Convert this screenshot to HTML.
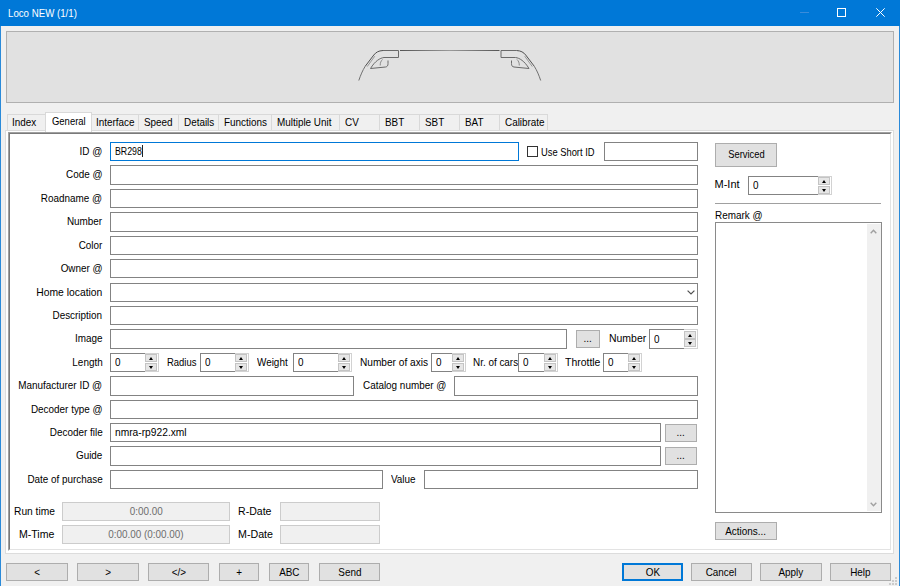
<!DOCTYPE html><html><head><meta charset="utf-8"><title>Loco NEW</title><style>
*{margin:0;padding:0;box-sizing:border-box}
html,body{width:900px;height:586px;overflow:hidden;background:#f0f0f0;position:relative;
 font-family:"Liberation Sans",sans-serif;font-size:11px;color:#000}
div,span{position:absolute}
.t{white-space:nowrap;line-height:19px;height:19px;transform:scaleX(.9);transform-origin:0 0}
.lbl{white-space:nowrap;line-height:19px;height:19px;text-align:right;transform:scaleX(.9);transform-origin:100% 0}
.c{display:inline-block;transform:scaleX(.9);white-space:nowrap}
.ed{background:#fff;border:1px solid #838383;height:19px}
.btn{background:#e1e1e1;border:1px solid #adadad;text-align:center;white-space:nowrap}
.dis{background:#f0f0f0;border:1px solid #cccccc;color:#6d6d6d;text-align:center;line-height:17px;white-space:nowrap}
.tab{top:114px;height:17px;background:#f0f0f0;border:1px solid #d9d9d9;border-bottom:none;line-height:15px;padding-left:5px;white-space:nowrap}
.sb{background:#fff;border:1px solid #838383;height:19px}
.sbb{background:#f0f0f0;border:1px solid #cfcfcf;border-left:none}
.ar{width:0;height:0;border-left:2.5px solid transparent;border-right:2.5px solid transparent}
</style></head><body>
<div style="left:0;top:0;width:900px;height:26px;background:#0078d7"></div>
<span class="t" style="left:7.5px;top:4px;color:#fff;transform:scaleX(.88)">Loco NEW (1/1)</span>
<div style="left:800px;top:12px;width:9px;height:1px;background:#3a8cdb"></div>
<div style="left:837px;top:8px;width:9px;height:9px;border:1px solid #fff"></div>
<svg style="position:absolute;left:876px;top:8px" width="9" height="9" viewBox="0 0 9 9"><path d="M0.3 0.3L8.7 8.7M8.7 0.3L0.3 8.7" stroke="#fff" stroke-width="1"/></svg>
<div style="left:0;top:26px;width:1px;height:560px;background:#2a8ad9"></div>
<div style="left:899px;top:26px;width:1px;height:560px;background:#2a8ad9"></div>
<div style="left:6px;top:31px;width:888px;height:72px;background:#e1e1e1;border:1px solid #b0b0b0"></div>
<svg style="position:absolute;left:0;top:0" width="900" height="110" viewBox="0 0 900 110">
<defs><linearGradient id="rg" gradientUnits="userSpaceOnUse" x1="400" x2="500" y1="0" y2="0"><stop offset="0" stop-color="#555"/><stop offset="0.5" stop-color="#9a9a9a"/><stop offset="1" stop-color="#555"/></linearGradient></defs>
<path d="M400 50.5 H499.5" stroke="url(#rg)" stroke-width="1" fill="none"/>
<g fill="none" stroke="#505050" stroke-width="1">
<path d="M383 50.5 H398.5 V57.5 H384 C380 58 375 61 370.5 68.5 L385.5 67 C387.5 66.7 388 65.5 388 63.5 V60.5" stroke="#6a6a6a"/>
<path d="M382.5 59.5 C380.8 61 380.2 63 380.2 65.5" stroke="#8a8a8a"/>
<path d="M383 50.5 C378.5 50.8 376 52.2 373.8 55 L365.2 66.3"/><path d="M365.2 66.3 C362.5 70.5 360.5 75.5 358.8 80.5" stroke="#707070"/>
<path d="M374.8 56.2 L367.2 66.6" stroke="#9a9a9a"/>
</g>
<g fill="none" stroke="#505050" stroke-width="1" transform="translate(899.5 0) scale(-1 1)">
<path d="M383 50.5 H398.5 V57.5 H384 C380 58 375 61 370.5 68.5 L385.5 67 C387.5 66.7 388 65.5 388 63.5 V60.5" stroke="#6a6a6a"/>
<path d="M382.5 59.5 C380.8 61 380.2 63 380.2 65.5" stroke="#8a8a8a"/>
<path d="M383 50.5 C378.5 50.8 376 52.2 373.8 55 L365.2 66.3"/><path d="M365.2 66.3 C362.5 70.5 360.5 75.5 358.8 80.5" stroke="#707070"/>
<path d="M374.8 56.2 L367.2 66.6" stroke="#9a9a9a"/>
</g>
</svg>
<div class="tab" style="left:7px;width:39px;padding-left:4px"><span class="c" style="position:static;transform-origin:0 0">Index</span></div>
<div class="tab" style="left:91px;width:48px;padding-left:4px"><span class="c" style="position:static;transform-origin:0 0">Interface</span></div>
<div class="tab" style="left:138px;width:41px;"><span class="c" style="position:static;transform-origin:0 0">Speed</span></div>
<div class="tab" style="left:178px;width:41px;"><span class="c" style="position:static;transform-origin:0 0">Details</span></div>
<div class="tab" style="left:218px;width:54px;"><span class="c" style="position:static;transform-origin:0 0">Functions</span></div>
<div class="tab" style="left:271px;width:69px;"><span class="c" style="position:static;transform-origin:0 0">Multiple Unit</span></div>
<div class="tab" style="left:339px;width:41px;"><span class="c" style="position:static;transform-origin:0 0">CV</span></div>
<div class="tab" style="left:379px;width:41px;"><span class="c" style="position:static;transform-origin:0 0">BBT</span></div>
<div class="tab" style="left:419px;width:41px;"><span class="c" style="position:static;transform-origin:0 0">SBT</span></div>
<div class="tab" style="left:459px;width:41px;"><span class="c" style="position:static;transform-origin:0 0">BAT</span></div>
<div class="tab" style="left:499px;width:49px;"><span class="c" style="position:static;transform-origin:0 0">Calibrate</span></div>
<div style="left:5px;top:130px;width:889px;height:424px;background:#fff;border:1px solid #dcdcdc"></div>
<div style="left:45px;top:112px;width:47px;height:20px;background:#fff;border:1px solid #d9d9d9;border-bottom:none;line-height:17px;padding-left:6px;white-space:nowrap"><span class="c" style="position:static;transform-origin:0 0;transform:scaleX(.86)">General</span></div>
<div style="left:8px;top:132px;width:884px;height:419px;border-top:1px solid #a0a0a0;border-left:1px solid #a0a0a0;border-right:1px solid #fff;border-bottom:1px solid #fff"></div>
<div style="left:9px;top:133px;width:882px;height:417px;border-top:1px solid #7a7a7a;border-left:1px solid #7a7a7a;border-right:1px solid #e3e3e3;border-bottom:1px solid #e3e3e3"></div>
<span class="lbl" style="right:797.5px;top:142px">ID @</span>
<span class="lbl" style="right:797.5px;top:165px">Code @</span>
<span class="lbl" style="right:797.5px;top:189px">Roadname @</span>
<span class="lbl" style="right:797.5px;top:212px">Number</span>
<span class="lbl" style="right:797.5px;top:236px">Color</span>
<span class="lbl" style="right:797.5px;top:259px">Owner @</span>
<span class="lbl" style="right:797.5px;top:283px;transform:scaleX(0.94)">Home location</span>
<span class="lbl" style="right:797.5px;top:306px">Description</span>
<span class="lbl" style="right:797.5px;top:329px">Image</span>
<span class="lbl" style="right:797.5px;top:353px">Length</span>
<span class="lbl" style="right:797.5px;top:376px">Manufacturer ID @</span>
<span class="lbl" style="right:797.5px;top:400px">Decoder type @</span>
<span class="lbl" style="right:797.5px;top:423px">Decoder file</span>
<span class="lbl" style="right:797.5px;top:446px">Guide</span>
<span class="lbl" style="right:797.5px;top:470px">Date of purchase</span>
<div class="ed" style="left:110px;top:142px;width:409px;height:19px;border-color:#0078d7"></div>
<span class="t" style="left:115px;top:142px;transform:scaleX(.8)">BR298</span>
<div style="left:142px;top:145px;width:1px;height:12px;background:#222"></div>
<div style="left:527px;top:146px;width:11px;height:11px;border:1px solid #333;background:#fff"></div>
<span class="t" style="left:541px;top:143px;transform:scaleX(.85)">Use Short ID</span>
<div class="ed" style="left:604px;top:142px;width:94px;height:19px;"></div>
<div class="ed" style="left:110px;top:165px;width:588px;height:20px;"></div>
<div class="ed" style="left:110px;top:189px;width:588px;height:19px;"></div>
<div class="ed" style="left:110px;top:212px;width:588px;height:20px;"></div>
<div class="ed" style="left:110px;top:236px;width:588px;height:19px;"></div>
<div class="ed" style="left:110px;top:259px;width:588px;height:19px;"></div>
<div class="ed" style="left:110px;top:283px;width:588px;height:19px;"></div>
<div class="ed" style="left:110px;top:306px;width:588px;height:19px;"></div>
<svg style="position:absolute;left:686.5px;top:290px" width="8" height="5" viewBox="0 0 8 5"><path d="M0.6 0.6L4 4L7.4 0.6" fill="none" stroke="#505050" stroke-width="1.2"/></svg>
<div class="ed" style="left:110px;top:329px;width:457px;height:20px;"></div>
<div class="btn" style="left:576px;top:330px;width:24px;height:18px;line-height:16px;line-height:15px"><span class="c" style="position:static;transform:scaleX(0.9)">...</span></div>
<span class="t" style="left:608.5px;top:329px;transform:scaleX(.95)">Number</span>
<div class="sb" style="left:649px;top:329px;width:36px;height:20px;border-right:none"></div>
<div style="left:684px;top:329px;width:14px;height:20px;background:#fff;border:1px solid #d2d2d2;border-left:none"></div>
<span class="t" style="left:654px;top:329.5px">0</span>
<div style="left:684px;top:331px;width:12px;height:8px;background:#e6e6e6;border:1px solid #c4c4c4"></div>
<div style="left:684px;top:339px;width:12px;height:8px;background:#e6e6e6;border:1px solid #c4c4c4"></div>
<div class="ar" style="left:687.5px;top:334px;border-bottom:3px solid #000"></div>
<div class="ar" style="left:687.5px;top:342px;border-top:3px solid #000"></div>
<div class="sb" style="left:110px;top:353px;width:36px;height:19px;border-right:none"></div>
<div style="left:145px;top:353px;width:14px;height:19px;background:#fff;border:1px solid #d2d2d2;border-left:none"></div>
<span class="t" style="left:115px;top:353.0px">0</span>
<div style="left:145px;top:354px;width:12px;height:8px;background:#e6e6e6;border:1px solid #c4c4c4"></div>
<div style="left:145px;top:363px;width:12px;height:8px;background:#e6e6e6;border:1px solid #c4c4c4"></div>
<div class="ar" style="left:148.5px;top:357px;border-bottom:3px solid #000"></div>
<div class="ar" style="left:148.5px;top:366px;border-top:3px solid #000"></div>
<span class="t" style="left:166.5px;top:353px;transform:scaleX(.86)">Radius</span>
<div class="sb" style="left:200px;top:353px;width:36px;height:19px;border-right:none"></div>
<div style="left:235px;top:353px;width:14px;height:19px;background:#fff;border:1px solid #d2d2d2;border-left:none"></div>
<span class="t" style="left:205px;top:353.0px">0</span>
<div style="left:235px;top:354px;width:12px;height:8px;background:#e6e6e6;border:1px solid #c4c4c4"></div>
<div style="left:235px;top:363px;width:12px;height:8px;background:#e6e6e6;border:1px solid #c4c4c4"></div>
<div class="ar" style="left:238.5px;top:357px;border-bottom:3px solid #000"></div>
<div class="ar" style="left:238.5px;top:366px;border-top:3px solid #000"></div>
<span class="t" style="left:257px;top:353px;">Weight</span>
<div class="sb" style="left:293px;top:353px;width:46px;height:19px;border-right:none"></div>
<div style="left:338px;top:353px;width:14px;height:19px;background:#fff;border:1px solid #d2d2d2;border-left:none"></div>
<span class="t" style="left:298px;top:353.0px">0</span>
<div style="left:338px;top:354px;width:12px;height:8px;background:#e6e6e6;border:1px solid #c4c4c4"></div>
<div style="left:338px;top:363px;width:12px;height:8px;background:#e6e6e6;border:1px solid #c4c4c4"></div>
<div class="ar" style="left:341.5px;top:357px;border-bottom:3px solid #000"></div>
<div class="ar" style="left:341.5px;top:366px;border-top:3px solid #000"></div>
<span class="t" style="left:359.5px;top:353px;transform:scaleX(.92)">Number of axis</span>
<div class="sb" style="left:431px;top:353px;width:22px;height:19px;border-right:none"></div>
<div style="left:452px;top:353px;width:14px;height:19px;background:#fff;border:1px solid #d2d2d2;border-left:none"></div>
<span class="t" style="left:436px;top:353.0px">0</span>
<div style="left:452px;top:354px;width:12px;height:8px;background:#e6e6e6;border:1px solid #c4c4c4"></div>
<div style="left:452px;top:363px;width:12px;height:8px;background:#e6e6e6;border:1px solid #c4c4c4"></div>
<div class="ar" style="left:455.5px;top:357px;border-bottom:3px solid #000"></div>
<div class="ar" style="left:455.5px;top:366px;border-top:3px solid #000"></div>
<span class="t" style="left:473px;top:353px;">Nr. of cars</span>
<div class="sb" style="left:518px;top:353px;width:27px;height:19px;border-right:none"></div>
<div style="left:544px;top:353px;width:14px;height:19px;background:#fff;border:1px solid #d2d2d2;border-left:none"></div>
<span class="t" style="left:523px;top:353.0px">0</span>
<div style="left:544px;top:354px;width:12px;height:8px;background:#e6e6e6;border:1px solid #c4c4c4"></div>
<div style="left:544px;top:363px;width:12px;height:8px;background:#e6e6e6;border:1px solid #c4c4c4"></div>
<div class="ar" style="left:547.5px;top:357px;border-bottom:3px solid #000"></div>
<div class="ar" style="left:547.5px;top:366px;border-top:3px solid #000"></div>
<span class="t" style="left:564.5px;top:353px;transform:scaleX(.95)">Throttle</span>
<div class="sb" style="left:603px;top:353px;width:26px;height:19px;border-right:none"></div>
<div style="left:628px;top:353px;width:14px;height:19px;background:#fff;border:1px solid #d2d2d2;border-left:none"></div>
<span class="t" style="left:608px;top:353.0px">0</span>
<div style="left:628px;top:354px;width:12px;height:8px;background:#e6e6e6;border:1px solid #c4c4c4"></div>
<div style="left:628px;top:363px;width:12px;height:8px;background:#e6e6e6;border:1px solid #c4c4c4"></div>
<div class="ar" style="left:631.5px;top:357px;border-bottom:3px solid #000"></div>
<div class="ar" style="left:631.5px;top:366px;border-top:3px solid #000"></div>
<div class="ed" style="left:110px;top:376px;width:244px;height:20px;"></div>
<span class="t" style="left:363px;top:376px;">Catalog number @</span>
<div class="ed" style="left:454px;top:376px;width:244px;height:20px;"></div>
<div class="ed" style="left:110px;top:400px;width:588px;height:19px;"></div>
<div class="ed" style="left:110px;top:423px;width:551px;height:19px;"></div>
<span class="t" style="left:115px;top:423px;transform:scaleX(.93)">nmra-rp922.xml</span>
<div class="btn" style="left:665px;top:424px;width:32px;height:18px;line-height:16px;line-height:15px"><span class="c" style="position:static;transform:scaleX(0.9)">...</span></div>
<div class="ed" style="left:110px;top:446px;width:551px;height:20px;"></div>
<div class="btn" style="left:665px;top:447px;width:32px;height:18px;line-height:16px;line-height:15px"><span class="c" style="position:static;transform:scaleX(0.9)">...</span></div>
<div class="ed" style="left:110px;top:470px;width:273px;height:19px;"></div>
<span class="t" style="left:391px;top:470px;">Value</span>
<div class="ed" style="left:424px;top:470px;width:274px;height:19px;"></div>
<span class="t" style="left:14px;top:502px;transform:scaleX(.93)">Run time</span>
<div class="dis" style="left:62px;top:502px;width:168px;height:19px"><span class="c" style="position:static">0:00.00</span></div>
<span class="t" style="left:237.5px;top:502px;transform:scaleX(.96)">R-Date</span>
<div class="dis" style="left:280px;top:502px;width:100px;height:19px"></div>
<span class="t" style="left:19px;top:525px;transform:scaleX(.96)">M-Time</span>
<div class="dis" style="left:62px;top:525px;width:168px;height:19px"><span class="c" style="position:static">0:00.00 (0:00.00)</span></div>
<span class="t" style="left:237.5px;top:525px;transform:scaleX(.97)">M-Date</span>
<div class="dis" style="left:280px;top:525px;width:100px;height:19px"></div>
<div class="btn" style="left:715px;top:143px;width:62px;height:24px;line-height:22px;line-height:20px"><span class="c" style="position:static;transform:scaleX(0.85)">Serviced</span></div>
<span class="t" style="left:714.5px;top:175px;transform:none">M-Int</span>
<div class="sb" style="left:748px;top:176px;width:71px;height:19px;border-right:none"></div>
<div style="left:818px;top:176px;width:14px;height:19px;background:#fff;border:1px solid #d2d2d2;border-left:none"></div>
<span class="t" style="left:753px;top:176.0px">0</span>
<div style="left:818px;top:177px;width:12px;height:8px;background:#e6e6e6;border:1px solid #c4c4c4"></div>
<div style="left:818px;top:186px;width:12px;height:8px;background:#e6e6e6;border:1px solid #c4c4c4"></div>
<div class="ar" style="left:821.5px;top:180px;border-bottom:3px solid #000"></div>
<div class="ar" style="left:821.5px;top:189px;border-top:3px solid #000"></div>
<div style="left:715px;top:203px;width:166px;height:1px;background:#a0a0a0"></div>
<span class="t" style="left:715px;top:206px;">Remark @</span>
<div style="left:715px;top:222px;width:167px;height:291px;background:#fff;border:1px solid #8a8a8a"></div>
<div style="left:867px;top:224px;width:14px;height:287px;background:#f0f0f0"></div>
<svg style="position:absolute;left:869.5px;top:229px" width="7" height="5" viewBox="0 0 7 5"><path d="M0.7 4.3L3.5 1.2L6.3 4.3" fill="none" stroke="#a0a0a0" stroke-width="1.4"/></svg>
<svg style="position:absolute;left:869.5px;top:501.5px" width="7" height="5" viewBox="0 0 7 5"><path d="M0.7 0.7L3.5 3.8L6.3 0.7" fill="none" stroke="#a0a0a0" stroke-width="1.4"/></svg>
<div class="btn" style="left:715px;top:522px;width:62px;height:18px;line-height:16px;line-height:17px"><span class="c" style="position:static;transform:scaleX(0.9)">Actions...</span></div>
<div class="btn" style="left:6px;top:563px;width:62px;height:18px;line-height:16px;line-height:17px"><span class="c" style="position:static;transform:scaleX(0.9)">&lt;</span></div>
<div class="btn" style="left:77px;top:563px;width:62px;height:18px;line-height:16px;line-height:17px"><span class="c" style="position:static;transform:scaleX(0.9)">&gt;</span></div>
<div class="btn" style="left:148px;top:563px;width:61px;height:18px;line-height:16px;line-height:17px"><span class="c" style="position:static;transform:scaleX(0.9)">&lt;/&gt;</span></div>
<div class="btn" style="left:219px;top:563px;width:40px;height:18px;line-height:16px;line-height:17px"><span class="c" style="position:static;transform:scaleX(0.9)">+</span></div>
<div class="btn" style="left:269px;top:563px;width:40px;height:18px;line-height:16px;line-height:17px"><span class="c" style="position:static;transform:scaleX(0.9)">ABC</span></div>
<div class="btn" style="left:319px;top:563px;width:61px;height:18px;line-height:16px;line-height:17px"><span class="c" style="position:static;transform:scaleX(0.9)">Send</span></div>
<div class="btn" style="left:691px;top:563px;width:61px;height:18px;line-height:16px;line-height:17px"><span class="c" style="position:static;transform:scaleX(0.9)">Cancel</span></div>
<div class="btn" style="left:760px;top:563px;width:62px;height:18px;line-height:16px;line-height:17px"><span class="c" style="position:static;transform:scaleX(0.9)">Apply</span></div>
<div class="btn" style="left:830px;top:563px;width:61px;height:18px;line-height:16px;line-height:17px"><span class="c" style="position:static;transform:scaleX(0.9)">Help</span></div>
<div class="btn" style="left:622px;top:563px;width:61px;height:18px;line-height:16px;line-height:17px;border-color:#0078d7;box-shadow:inset 0 0 0 1px #0078d7"><span class="c" style="position:static;transform:scaleX(0.9)">OK</span></div>
<svg style="position:absolute;left:886px;top:574px" width="12" height="12" viewBox="0 0 12 12"><g fill="#cbcbcb"><rect x="9" y="3" width="2" height="2"/><rect x="6" y="6" width="2" height="2"/><rect x="9" y="6" width="2" height="2"/><rect x="3" y="9" width="2" height="2"/><rect x="6" y="9" width="2" height="2"/><rect x="9" y="9" width="2" height="2"/></g></svg>
</body></html>
